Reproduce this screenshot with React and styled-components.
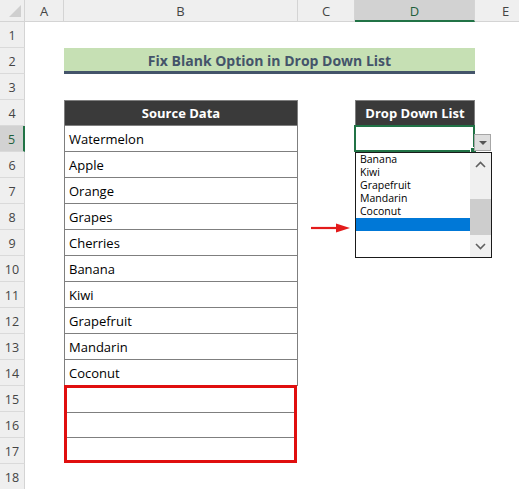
import React from 'react';
import styled, { createGlobalStyle, css } from 'styled-components';

const GlobalStyle = createGlobalStyle`
  html, body {
    margin: 0;
    padding: 0;
    background: #ffffff;
    overflow: hidden;
  }
  body {
    font-family: 'Open Sans', 'Liberation Sans', sans-serif;
  }
`;

const GREEN = '#217346';

const Sheet = styled.div`
  position: relative;
  display: grid;
  grid-template-columns: 25px 39px 234px 57px 120px 62px;
  grid-template-rows: 22px repeat(18, 26px);
  width: 537px;
  background: #ffffff;
`;

const Corner = styled.div`
  grid-row: 1;
  grid-column: 1;
  background: #efefef;
  border-right: 1px solid #d4d4d4;
  border-bottom: 1px solid #d4d4d4;
  box-sizing: border-box;
  display: flex;
  align-items: flex-end;
  justify-content: flex-end;
  padding: 0 3px 4px 0;
`;

const ColHead = styled.div`
  grid-row: 1;
  grid-column: ${(p) => p.$col};
  background: ${(p) => (p.$active ? '#d2d2d2' : '#efefef')};
  border-right: 1px solid #d4d4d4;
  border-bottom: ${(p) => (p.$active ? `2px solid ${GREEN}` : '1px solid #d4d4d4')};
  box-sizing: border-box;
  display: flex;
  align-items: center;
  justify-content: center;
  font-size: 13px;
  color: ${(p) => (p.$active ? '#1f5f3b' : '#444444')};
  padding-top: ${(p) => (p.$active ? '1px' : '0')};
`;

const RowHead = styled.div`
  grid-column: 1;
  grid-row: ${(p) => p.$row};
  background: ${(p) => (p.$active ? '#d2d2d2' : '#efefef')};
  border-bottom: 1px solid #dadada;
  border-right: ${(p) => (p.$active ? `2px solid ${GREEN}` : '1px solid #d4d4d4')};
  box-sizing: border-box;
  display: flex;
  align-items: center;
  justify-content: center;
  font-size: 12.5px;
  color: ${(p) => (p.$active ? '#1f5f3b' : '#444444')};
  padding-top: 2px;
`;

const Title = styled.div`
  grid-row: 3;
  grid-column: 3 / 6;
  background: #c6e0b4;
  border-bottom: 3px solid #44546a;
  box-sizing: border-box;
  display: flex;
  align-items: center;
  justify-content: center;
  font-size: 14px;
  font-weight: 700;
  color: #44546a;
  padding-top: 1px;
`;

const Table = styled.div`
  grid-row: 5 / 19;
  grid-column: 3;
  display: flex;
  flex-direction: column;
`;

const HeadCell = styled.div`
  height: 26px;
  box-sizing: border-box;
  background: #3a3a3a;
  border: 1px solid #7f7f7f;
  color: #ffffff;
  font-weight: 700;
  font-size: 13px;
  display: flex;
  align-items: center;
  justify-content: center;
`;

const Cell = styled.div`
  height: 26px;
  box-sizing: border-box;
  border-left: 1px solid #7f7f7f;
  border-right: 1px solid #7f7f7f;
  border-bottom: 1px solid #7f7f7f;
  font-size: 13px;
  color: #000000;
  display: flex;
  align-items: center;
  padding: 1px 0 0 4px;
  ${(p) =>
    p.$plain &&
    css`
      border-left: none;
      border-right: none;
      height: 25px;
    `}
  ${(p) =>
    p.$last &&
    css`
      border-bottom: none;
      height: 22px;
    `}
`;

const Marked = styled.div`
  border: 3px solid #e00f0f;
  margin: -1px 1px 0 0;
  height: 78px;
  box-sizing: border-box;
  display: flex;
  flex-direction: column;
`;

const DropHead = styled(HeadCell)`
  grid-row: 5;
  grid-column: 5;
`;

const DropCell = styled.div`
  grid-row: 6;
  grid-column: 5;
  position: relative;
  margin: -1px 0 0 -1px;
  border: 2px solid ${GREEN};
  box-sizing: border-box;
`;

const FillHandle = styled.span`
  position: absolute;
  right: -4px;
  bottom: -4px;
  width: 5px;
  height: 5px;
  background: ${GREEN};
  border: 1px solid #ffffff;
`;

const ArrowButton = styled.div`
  position: absolute;
  left: 118px;
  top: 7px;
  width: 17px;
  height: 17px;
  box-sizing: border-box;
  background: #dedede;
  border: 1px solid #a6a6a6;
  display: flex;
  align-items: center;
  justify-content: center;
  &::after {
    content: '';
    border-left: 4px solid transparent;
    border-right: 4px solid transparent;
    border-top: 4px solid #555555;
    margin-top: 1px;
  }
`;

const ListBox = styled.div`
  position: absolute;
  left: -1px;
  top: 25px;
  width: 137px;
  height: 106px;
  box-sizing: border-box;
  border: 1px solid #1a1a1a;
  background: #ffffff;
  display: flex;
  z-index: 3;
`;

const Options = styled.div`
  flex: 1;
  display: flex;
  flex-direction: column;
`;

const Option = styled.div`
  height: 13px;
  line-height: 13px;
  font-size: 10.5px;
  padding-left: 4px;
  color: #000000;
  background: ${(p) => (p.$selected ? '#0078d7' : 'transparent')};
`;

const ScrollBar = styled.div`
  width: 21px;
  background: #f0f0f0;
  display: flex;
  flex-direction: column;
  align-items: center;
`;

const ScrollBtn = styled.div`
  height: 22px;
  width: 100%;
  display: flex;
  align-items: center;
  justify-content: center;
`;

const Track = styled.div`
  flex: 1;
  width: 100%;
  display: flex;
  flex-direction: column;
  justify-content: flex-end;
`;

const Thumb = styled.div`
  height: 36px;
  width: 100%;
  background: #cdcdcd;
`;

const RedArrow = styled.svg`
  position: absolute;
  left: 311px;
  top: 222px;
`;

const Chevron = ({ up }) => (
  <svg width="11" height="7" viewBox="0 0 11 7">
    <path
      d={up ? 'M1 6 L5.5 1.5 L10 6' : 'M1 1 L5.5 5.5 L10 1'}
      fill="none"
      stroke="#606060"
      strokeWidth="1.6"
    />
  </svg>
);

const fruits = [
  'Watermelon',
  'Apple',
  'Orange',
  'Grapes',
  'Cherries',
  'Banana',
  'Kiwi',
  'Grapefruit',
  'Mandarin',
  'Coconut',
];

const listItems = ['Banana', 'Kiwi', 'Grapefruit', 'Mandarin', 'Coconut'];

const columns = ['A', 'B', 'C', 'D', 'E'];

export default function App() {
  return (
    <>
      <GlobalStyle />
      <Sheet>
        <Corner>
          <svg width="12" height="12" viewBox="0 0 12 12">
            <polygon points="12,0 12,12 0,12" fill="#cfcfcf" />
          </svg>
        </Corner>
        {columns.map((c, i) => (
          <ColHead key={c} $col={i + 2} $active={c === 'D'}>
            {c}
          </ColHead>
        ))}
        {Array.from({ length: 18 }, (_, i) => (
          <RowHead key={i} $row={i + 2} $active={i === 4}>
            {i + 1}
          </RowHead>
        ))}

        <Title>Fix Blank Option in Drop Down List</Title>

        <Table>
          <HeadCell>Source Data</HeadCell>
          {fruits.map((f) => (
            <Cell key={f}>{f}</Cell>
          ))}
          <Marked>
            <Cell $plain />
            <Cell $plain />
            <Cell $plain $last />
          </Marked>
        </Table>

        <DropHead>Drop Down List</DropHead>
        <DropCell>
          <FillHandle />
          <ArrowButton />
          <ListBox>
            <Options>
              {listItems.map((item) => (
                <Option key={item}>{item}</Option>
              ))}
              <Option $selected>&nbsp;</Option>
            </Options>
            <ScrollBar>
              <ScrollBtn>
                <Chevron up />
              </ScrollBtn>
              <Track>
                <Thumb />
              </Track>
              <ScrollBtn>
                <Chevron />
              </ScrollBtn>
            </ScrollBar>
          </ListBox>
        </DropCell>

        <RedArrow width="40" height="12" viewBox="0 0 40 12">
          <line x1="0" y1="6" x2="28" y2="6" stroke="#e31b1b" strokeWidth="2.2" />
          <polygon points="25,1.5 39,6 25,10.5" fill="#e31b1b" />
        </RedArrow>
      </Sheet>
    </>
  );
}
